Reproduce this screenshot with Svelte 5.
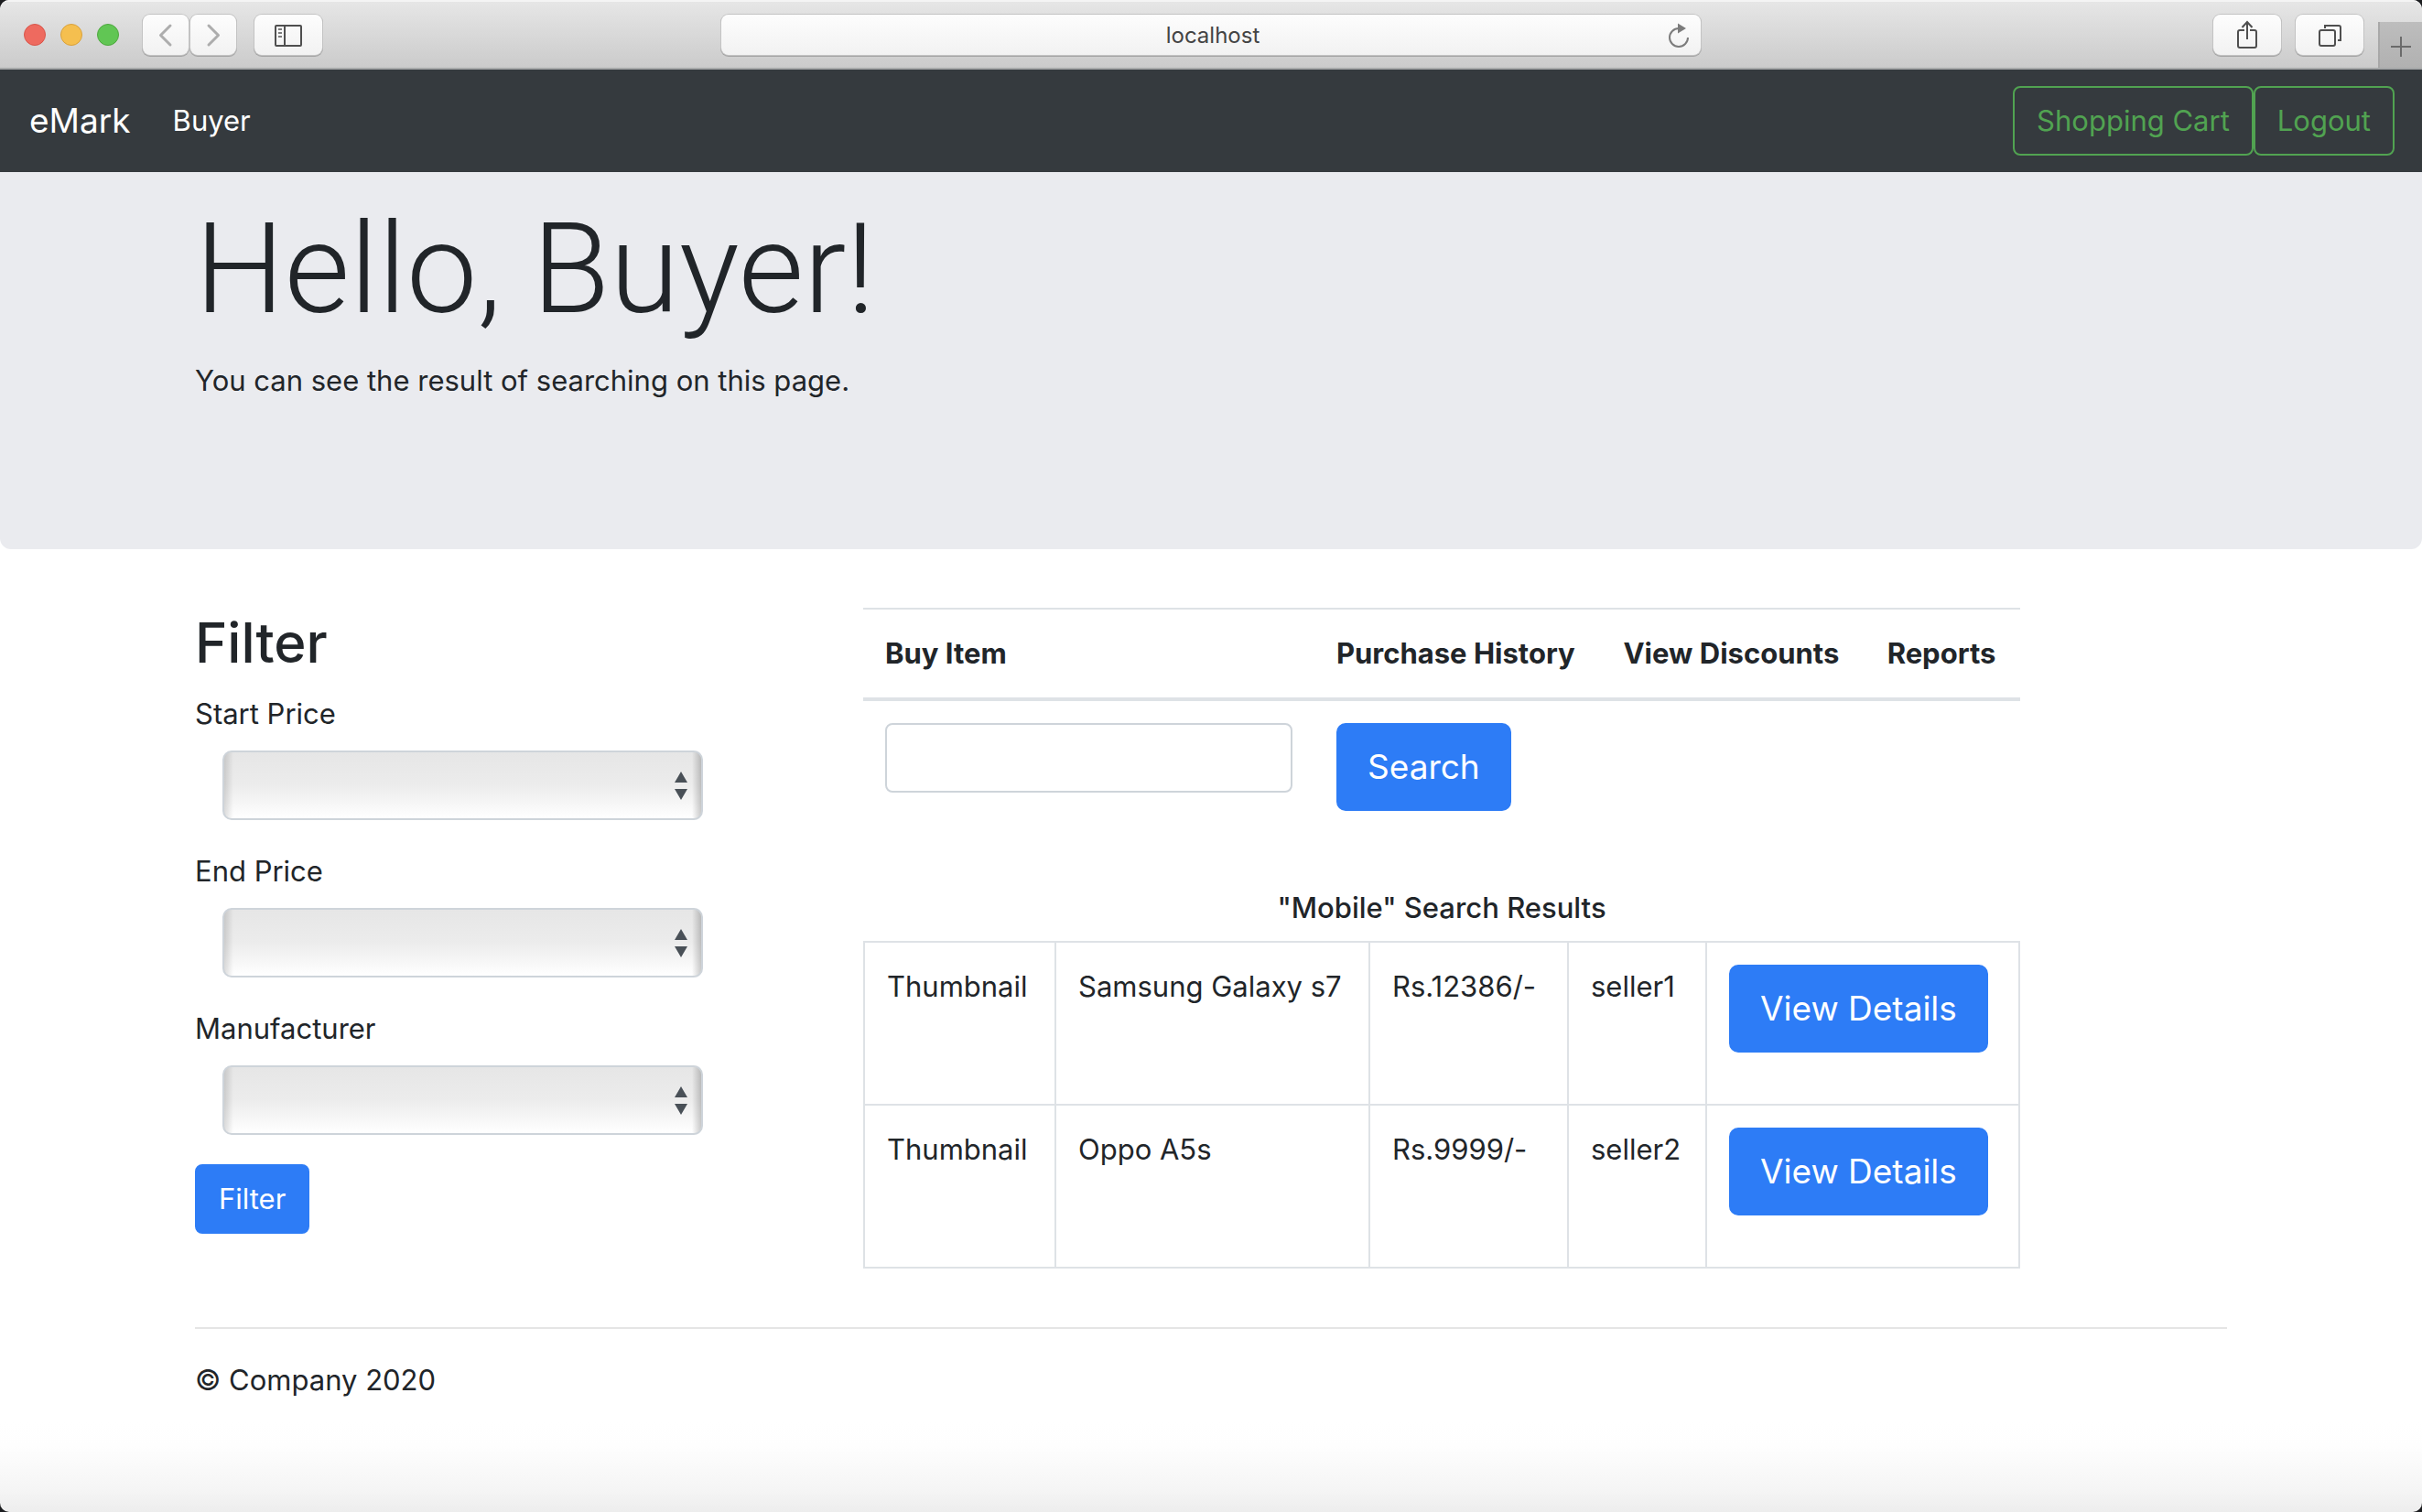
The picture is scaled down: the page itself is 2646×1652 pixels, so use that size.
<script>
  const filters = [
    { id: 'start-price', label: 'Start Price' },
    { id: 'end-price', label: 'End Price' },
    { id: 'manufacturer', label: 'Manufacturer' }
  ];
  const results = [
    { name: 'Samsung Galaxy s7', price: 'Rs.12386/-', seller: 'seller1' },
    { name: 'Oppo A5s', price: 'Rs.9999/-', seller: 'seller2' }
  ];
</script>

<div class="window">
  <header class="toolbar">
    <div class="side">
      <div class="lights">
        <button class="light close" aria-label="Close"></button>
        <button class="light minimise" aria-label="Minimise"></button>
        <button class="light zoom" aria-label="Zoom"></button>
      </div>
      <div class="history">
        <button class="tool narrow" aria-label="Back">
          <svg width="50" height="44" viewBox="0 0 50 44"><path d="M30 12 19.500 22.500 30 33" fill="none" stroke="#adadad" stroke-width="3" stroke-linecap="round" stroke-linejoin="round" /></svg>
        </button>
        <button class="tool narrow" aria-label="Forward">
          <svg width="50" height="44" viewBox="0 0 50 44"><path d="M20 12 30.500 22.500 20 33" fill="none" stroke="#adadad" stroke-width="3" stroke-linecap="round" stroke-linejoin="round" /></svg>
        </button>
      </div>
      <button class="tool" aria-label="Sidebar">
        <svg width="74" height="44" viewBox="0 0 74 44" fill="none" stroke="#4f4f4f" stroke-width="2">
          <rect x="23" y="12" width="28" height="22" rx="1" />
          <path d="M33 12v22" />
          <path d="M26 16h4M26 20h4M26 24h4" stroke="#7c7c7c" />
        </svg>
      </button>
    </div>
    <div class="address">
      <input type="text" aria-label="Address" value="localhost" />
      <button class="reload" aria-label="Reload">
        <svg width="28" height="38" viewBox="0 0 28 38"><path d="M24 21a10 10 0 1 1-10-10" fill="none" stroke="#7c7c7c" stroke-width="2" /><path d="M13 5.500 22 11 13 16.500z" fill="#7c7c7c" /></svg>
      </button>
    </div>
    <div class="side end">
      <button class="tool" aria-label="Share">
        <svg width="74" height="44" viewBox="0 0 74 44" fill="none" stroke="#4f4f4f" stroke-width="2">
          <path d="M34 17h-5q-2 0-2 2v15q0 2 2 2h16q2 0 2-2V19q0-2-2-2h-5" />
          <path d="M37 27V8M31.500 14 37 8l5.500 6" />
        </svg>
      </button>
      <button class="tool" aria-label="Show all tabs">
        <svg width="74" height="44" viewBox="0 0 74 44" fill="none" stroke="#4f4f4f" stroke-width="2">
          <rect x="26" y="17" width="17" height="17" rx="2" />
          <path d="M32 15v-3h15q2 0 2 2v14h-3" />
        </svg>
      </button>
      <button class="new-tab" aria-label="New tab">
        <svg width="46" height="50" viewBox="0 0 46 50"><path d="M12 27h22M23 16v22" stroke="#6b6b6b" stroke-width="2" /></svg>
      </button>
    </div>
  </header>

  <nav class="navbar">
    <a class="brand" href="#home">eMark</a>
    <a class="link" href="#buyer">Buyer</a>
    <div class="actions">
      <button class="btn outline">Shopping Cart</button>
      <button class="btn outline">Logout</button>
    </div>
  </nav>

  <section class="hero">
    <div class="container">
      <h1>Hello, Buyer!</h1>
      <p>You can see the result of searching on this page.</p>
    </div>
  </section>

  <main class="container columns">
    <form class="filter" onsubmit={(e) => e.preventDefault()}>
      <h2>Filter</h2>
      {#each filters as f}
        <div class="field">
          <label for={f.id}>{f.label}</label>
          <div class="select">
            <select id={f.id}><option value=""></option></select>
            <svg width="16" height="34" viewBox="0 0 16 34" aria-hidden="true"><path d="M1 13h14L8 1zM1 20h14L8 32z" fill="#495057" /></svg>
          </div>
        </div>
      {/each}
      <button class="btn primary" type="submit">Filter</button>
    </form>

    <div class="content">
      <table class="search">
        <thead>
          <tr><th class="item">Buy Item</th><th>Purchase History</th><th>View Discounts</th><th>Reports</th></tr>
        </thead>
        <tbody>
          <tr>
            <td><input type="text" aria-label="Item" /></td>
            <td colspan="3"><button class="btn primary large">Search</button></td>
          </tr>
        </tbody>
      </table>

      <table class="results">
        <caption>"Mobile" Search Results</caption>
        <colgroup><col class="thumb" /><col class="name" /><col class="price" /><col class="seller" /><col class="action" /></colgroup>
        <tbody>
          {#each results as r}
            <tr>
              <td>Thumbnail</td>
              <td>{r.name}</td>
              <td>{r.price}</td>
              <td>{r.seller}</td>
              <td><button class="btn primary large">View Details</button></td>
            </tr>
          {/each}
        </tbody>
      </table>
    </div>
  </main>

  <footer class="container">
    <hr />
    <p>© Company 2020</p>
  </footer>
</div>

<style>
  :global(body) {
    margin: 0;
    background: #1c1d20;
  }
  .window, .window :global(*) {
    box-sizing: border-box;
  }
  .window {
    display: flex;
    flex-direction: column;
    min-height: 100vh;
    overflow: hidden;
    border-radius: 10px;
    background: linear-gradient(to top, #ededed 0, #f5f5f5 24px, #fefefe 72px, #fff 100px);
    color: #212529;
    font: 400 31px/48px Inter, "Liberation Sans", sans-serif;
  }
  button, input, select {
    margin: 0;
    font: inherit;
  }

  .toolbar {
    display: grid;
    grid-template-columns: minmax(0, 1fr) minmax(0, 1070px) minmax(0, 1fr);
    height: 76px;
    border-top: 2px solid #f4f4f4;
    border-bottom: 2px solid #a5a7a8;
    background: linear-gradient(#e6e6e6, #cbcbcb);
  }
  .side {
    display: flex;
    align-items: flex-start;
    gap: 20px;
    padding: 14px 0 0 26px;
  }
  .side.end {
    justify-content: flex-end;
    gap: 16px;
    padding-left: 0;
  }
  .lights {
    display: flex;
    gap: 16px;
    padding: 10px 6px 0 0;
  }
  .light {
    width: 24px;
    height: 24px;
    padding: 0;
    border: 1px solid;
    border-radius: 50%;
  }
  .close { background: #ee6a5f; border-color: #d8564b; }
  .minimise { background: #f5bf4f; border-color: #d9a13c; }
  .zoom { background: #61c654; border-color: #4fa83f; }
  .history {
    display: flex;
    gap: 2px;
  }
  .tool {
    width: 74px;
    height: 44px;
    padding: 0;
    border: 0;
    border-radius: 8px;
    background: linear-gradient(#fdfdfd, #f2f2f2);
    box-shadow: 0 0 0 1px #c3c3c3, 0 1px 0 1px #a3a3a3;
  }
  .tool.narrow {
    width: 50px;
  }
  svg {
    display: block;
  }
  .address {
    display: flex;
    height: 44px;
    margin-top: 14px;
    padding: 0 10px 0 42px;
    border-radius: 8px;
    background: linear-gradient(#fdfdfd, #f2f2f2);
    box-shadow: 0 0 0 1px #c3c3c3, 0 1px 0 1px #a3a3a3;
  }
  .address input {
    flex: 1;
    min-width: 0;
    padding: 2px 0 0;
    border: 0;
    background: none;
    color: #444;
    font-size: 24px;
    text-align: center;
  }
  .reload {
    padding: 2px 0 0;
    border: 0;
    background: none;
  }
  .new-tab {
    align-self: flex-end;
    width: 48px;
    height: 50px;
    padding: 0;
    border: 0;
    border-left: 2px solid #a8a8a8;
    background: linear-gradient(#bdbdbd, #b1b1b1);
  }

  .navbar {
    display: flex;
    align-items: center;
    height: 112px;
    padding: 0 30px 0 32px;
    background: #353a3e;
  }
  .navbar a {
    color: #fff;
    text-decoration: none;
  }
  .navbar .brand {
    margin-right: 46px;
    font-size: 37px;
  }
  .actions {
    display: flex;
    margin-left: auto;
  }
  .btn {
    height: 76px;
    padding: 0 24px;
    border: 2px solid;
    border-radius: 8px;
  }
  .outline {
    border-color: #51a351;
    background: none;
    color: #51a351;
  }
  .primary {
    border-color: #2d7cf6;
    background: #2d7cf6;
    color: #fff;
  }
  .large {
    height: 96px;
    padding: 0 32px;
    border-radius: 10px;
    font-size: 37px;
  }

  .container {
    width: 100%;
    max-width: 2280px;
    margin: 0 auto;
    padding: 0 30px;
  }
  .hero {
    height: 412px;
    padding-top: 20px;
    border-radius: 0 0 12px 12px;
    background: #eaebef;
  }
  h1 {
    margin: 0 0 12px;
    font-family: Roboto, Inter, sans-serif;
    font-size: 138px;
    font-weight: 300;
    line-height: 172px;
  }
  p {
    margin: 0;
  }

  .columns {
    display: grid;
    grid-template-columns: 730fr 1490fr;
    margin-top: 64px;
  }
  .filter {
    width: 76%;
  }
  h2 {
    margin: 0 0 16px;
    font-size: 60px;
    font-weight: 500;
    line-height: 76px;
  }
  .field {
    margin-bottom: 32px;
  }
  label {
    display: block;
    margin-bottom: 16px;
  }
  .select {
    position: relative;
    margin-left: 30px;
  }
  .select select {
    display: block;
    width: 100%;
    height: 76px;
    border: 2px solid #ced4da;
    border-radius: 10px;
    appearance: none;
    background:
      linear-gradient(to right, #0002, #0000 10px, #0000 calc(100% - 10px), #0003),
      linear-gradient(#e6e6e6, #ececec 50%, #fff);
  }
  .select svg {
    position: absolute;
    top: 22px;
    right: 16px;
    pointer-events: none;
  }

  .content {
    max-width: 1264px;
  }
  table {
    width: 100%;
    border-collapse: collapse;
  }
  th, td {
    padding: 24px;
    text-align: left;
    vertical-align: top;
  }
  .search {
    border-collapse: separate;
    border-spacing: 0;
  }
  .search th {
    border-top: 2px solid #dee2e6;
    border-bottom: 4px solid #dee2e6;
    font-weight: 700;
    white-space: nowrap;
  }
  .item {
    width: 39%;
  }
  .search input {
    display: block;
    width: 100%;
    height: 76px;
    padding: 0 24px;
    border: 2px solid #ced4da;
    border-radius: 8px;
    background: #fff;
  }
  .results {
    margin-top: 58px;
    table-layout: fixed;
  }
  .results caption {
    padding-bottom: 12px;
    font-weight: 500;
  }
  .results td {
    height: 178px;
    border: 2px solid #dee2e6;
    white-space: nowrap;
  }
  .results .btn {
    display: block;
  }
  .thumb { width: 209px; }
  .name { width: 343px; }
  .price { width: 217px; }
  .seller { width: 151px; }

  footer hr {
    height: 2px;
    margin: 64px 0 32px;
    border: 0;
    background: #e5e5e5;
  }
</style>
